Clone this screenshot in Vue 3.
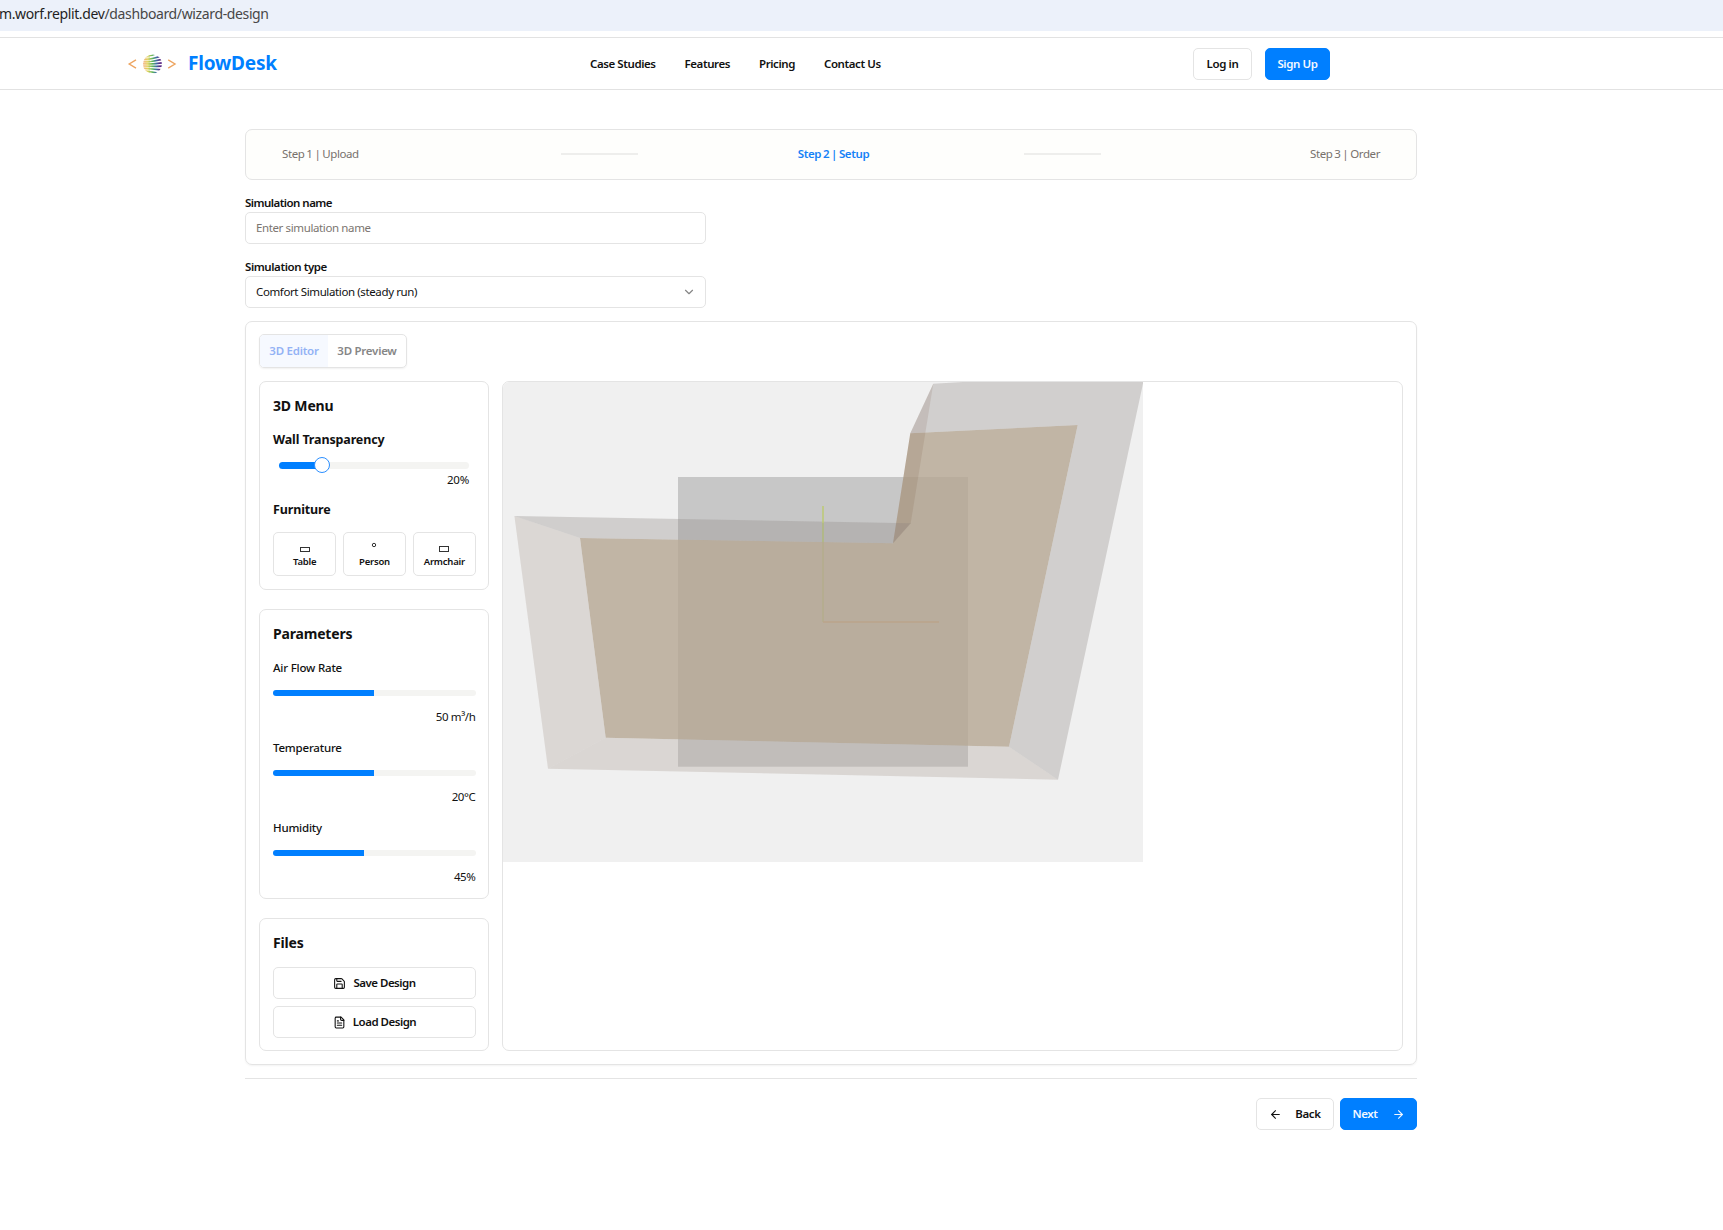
<script setup>
const nav = [
  { label: 'Case Studies', cls: 'n1' },
  { label: 'Features', cls: 'n2' },
  { label: 'Pricing', cls: 'n3' },
  { label: 'Contact Us', cls: 'n4' },
]
const params = [
  { label: 'Air Flow Rate', value: '50 m³/h', fill: 49.8 },
  { label: 'Temperature', value: '20°C', fill: 49.8 },
  { label: 'Humidity', value: '45%', fill: 45 },
]
// right-hand heights of the globe's blades, fanning out from its left rim
const blades = [-13, -8.4, -4.6, -1.2, 2.2, 5.8, 10]
const blade = (s) => {
  const l = 12 + s * 0.62
  const r = 12 + s
  return `M15 ${l} Q24 ${l + 0.3} 35 ${r - 0.9} V${r + 0.9} Q24 ${l + 2.2} 15 ${l + 0.9}Z`
}
</script>

<template>
  <div class="page">
    <div class="address"><span class="host">m.worf.replit.dev</span><span class="path">/dashboard/wizard-design</span></div>

    <header class="header">
      <div class="brand">
        <svg class="logo" width="50" height="24" viewBox="0 0 50 24">
          <defs>
            <linearGradient id="globe" gradientUnits="userSpaceOnUse" x1="16" y1="0" x2="35" y2="0">
              <stop offset="0" stop-color="#f5ab7a" />
              <stop offset="0.25" stop-color="#e0d45c" />
              <stop offset="0.5" stop-color="#5cb35c" />
              <stop offset="0.7" stop-color="#3d6fa8" />
              <stop offset="0.88" stop-color="#5b2a86" />
            </linearGradient>
            <clipPath id="disc"><circle cx="25.500" cy="12" r="9.500" /></clipPath>
          </defs>
          <g fill="none" stroke="#eda561" stroke-width="1.400">
            <path d="M9 7.800 2.200 12l6.800 4.200" />
            <path d="M41.200 7.800 48 12l-6.800 4.200" />
          </g>
          <g clip-path="url(#disc)" fill="url(#globe)">
            <path v-for="s in blades" :key="s" :d="blade(s)" />
            <path d="M15 0h8v24H15z" opacity="0.4" />
          </g>
        </svg>
        <span class="name">FlowDesk</span>
      </div>
      <nav class="nav">
        <a v-for="n in nav" :key="n.label" :class="n.cls">{{ n.label }}</a>
      </nav>
      <div class="auth">
        <button class="btn login">Log in</button>
        <button class="btn primary signup">Sign Up</button>
      </div>
    </header>

    <main class="main">
      <div class="steps">
        <span class="s1">Step 1 | Upload</span>
        <i></i>
        <span class="s2">Step 2 | Setup</span>
        <i></i>
        <span class="s3">Step 3 | Order</span>
      </div>

      <label class="label first">Simulation name</label>
      <div class="field placeholder"><span>Enter simulation name</span></div>
      <label class="label">Simulation type</label>
      <div class="field">
        <span>Comfort Simulation (steady run)</span>
        <svg width="14" height="14" viewBox="0 0 24 24" fill="none" stroke="#868686" stroke-width="2" stroke-linecap="round" stroke-linejoin="round"><path d="m6 9 6 6 6-6" /></svg>
      </div>

      <section class="card">
        <div class="tabs">
          <div class="tab active"><span>3D Editor</span></div>
          <div class="tab"><span>3D Preview</span></div>
        </div>

        <div class="cols">
          <aside class="side">
            <div class="panel menu">
              <h3 class="t-menu">3D Menu</h3>
              <h4 class="t-wall">Wall Transparency</h4>
              <div class="slider"><div class="range"></div><div class="thumb"></div></div>
              <div class="pct">20%</div>
              <h4 class="t-furn">Furniture</h4>
              <div class="furniture">
                <button>
                  <svg width="12" height="14" viewBox="0 0 12 14"><rect x="1.500" y="6.500" width="9" height="4" fill="none" stroke="#333" /></svg>
                  <span>Table</span>
                </button>
                <button>
                  <svg width="12" height="14" viewBox="0 0 12 14"><circle cx="6" cy="4" r="1.700" fill="none" stroke="#333" /></svg>
                  <span>Person</span>
                </button>
                <button>
                  <svg width="12" height="14" viewBox="0 0 12 14"><rect x="1.500" y="5.500" width="9" height="5" fill="none" stroke="#333" /></svg>
                  <span>Armchair</span>
                </button>
              </div>
            </div>

            <div class="panel params">
              <h3 class="t-params">Parameters</h3>
              <div v-for="p in params" :key="p.label" class="param">
                <div class="p-label">{{ p.label }}</div>
                <div class="bar"><div :style="{ width: p.fill + '%' }"></div></div>
                <div class="p-value">{{ p.value }}</div>
              </div>
            </div>

            <div class="panel files">
              <h3 class="t-files">Files</h3>
              <button class="btn file">
                <svg width="13" height="13" viewBox="0 0 24 24" fill="none" stroke="currentColor" stroke-width="2" stroke-linecap="round" stroke-linejoin="round"><path d="M15.200 3a2 2 0 0 1 1.400.6l3.800 3.800a2 2 0 0 1 .6 1.400V19a2 2 0 0 1-2 2H5a2 2 0 0 1-2-2V5a2 2 0 0 1 2-2z" /><path d="M17 21v-7a1 1 0 0 0-1-1H8a1 1 0 0 0-1 1v7" /><path d="M7 3v4a1 1 0 0 0 1 1h7" /></svg>
                <span>Save Design</span>
              </button>
              <button class="btn file">
                <svg width="13" height="13" viewBox="0 0 24 24" fill="none" stroke="currentColor" stroke-width="2" stroke-linecap="round" stroke-linejoin="round"><path d="M15 2H6a2 2 0 0 0-2 2v16a2 2 0 0 0 2 2h12a2 2 0 0 0 2-2V7Z" /><path d="M14 2v4a2 2 0 0 0 2 2h4" /><path d="M10 9H8" /><path d="M16 13H8" /><path d="M16 17H8" /></svg>
                <span>Load Design</span>
              </button>
            </div>
          </aside>

          <div class="viewer">
            <svg class="scene" width="640" height="480" viewBox="503 382 640 480">
              <rect x="503" y="382" width="640" height="480" fill="#f0f0f0" />
              <rect x="678" y="477" width="290" height="289.700" fill="#000" opacity="0.167" />
              <!-- floor -->
              <path d="M580 538 893 543.300 910.300 433.300 1077.700 425 1009 746.700 605.700 737.700Z" fill="#b5a692" opacity="0.8" />
              <!-- walls -->
              <path d="M514.400 516 580 538 605.700 737.700 548 768.700Z" fill="#bbb2ab" opacity="0.4" />
              <path d="M548 768.700 605.700 737.700 1009 746.700 1058 779.700Z" fill="#b8afa8" opacity="0.4" />
              <path d="M514.400 516 910.700 523.300 893 543.300 580 538Z" fill="#96908c" opacity="0.35" />
              <path d="M910.300 433.300 933.300 383.700 963 382H1143.300L1058 779.700 1009 746.700 1077.700 425Z" fill="#99928e" opacity="0.35" />
              <path d="M933.300 383.700 910.300 433.300 893 543.300 910.700 523.300Z" fill="#6e4428" opacity="0.12" />
              <!-- axes -->
              <path d="M823 506V523" stroke="#bccb6e" stroke-width="1.400" />
              <path d="M823 523V542" stroke="#afba78" stroke-width="1.400" />
              <path d="M823 542V622" stroke="#b4ad8b" stroke-width="1.400" />
              <path d="M823 622H939" stroke="#bba58b" stroke-width="1.400" />
            </svg>
          </div>
        </div>
      </section>

      <div class="footer">
        <button class="btn back">
          <svg width="13" height="13" viewBox="0 0 24 24" fill="none" stroke="currentColor" stroke-width="2" stroke-linecap="round" stroke-linejoin="round"><path d="m12 19-7-7 7-7" /><path d="M19 12H5" /></svg>
          <span>Back</span>
        </button>
        <button class="btn primary next">
          <span>Next</span>
          <svg width="13" height="13" viewBox="0 0 24 24" fill="none" stroke="currentColor" stroke-width="2" stroke-linecap="round" stroke-linejoin="round"><path d="M5 12h14" /><path d="m12 5 7 7-7 7" /></svg>
        </button>
      </div>
    </main>
  </div>
</template>

<style>
body { background: #fff; }
</style>

<style scoped>
* { box-sizing: border-box; }
.page { width: 1723px; height: 1230px; overflow: hidden; background: #fff; color: #111; font-family: "Noto Sans", "Open Sans", sans-serif; font-size: 11.5px; line-height: 16px; letter-spacing: -0.38px; white-space: nowrap; }
.address { height: 31px; margin-left: -1px; background: #ecf1fa; font-size: 14px; line-height: 28px; letter-spacing: -0.37px; }
.host { color: #1f1f1f; }
.path { color: #474747; }
.header { margin-top: 6px; height: 53px; border-top: 1px solid #e2e2e2; border-bottom: 1px solid #e2e2e2; display: flex; align-items: center; padding-left: 127px; }
.brand { display: flex; align-items: center; width: 463px; }
.name { margin-left: 11px; font-size: 19px; font-weight: 700; line-height: 22px; padding-bottom: 1px; letter-spacing: -0.19px; color: #007fff; }
.nav { display: flex; width: 603px; font-weight: 600; letter-spacing: -0.42px; }
.n1 { width: 94.500px; } .n2 { width: 74.500px; } .n3 { width: 65px; }
.auth { display: flex; gap: 13px; }
.btn { display: flex; align-items: center; justify-content: center; height: 32px; padding: 0; border: 1px solid #e4e4e4; border-radius: 5px; background: #fff; color: #111; font: inherit; font-weight: 600; letter-spacing: inherit; }
.btn.primary { background: #007fff; border-color: #007fff; color: #f3f8ff; }
.login { width: 59px; } .signup { width: 65px; }

.main { width: 1172px; margin: 39px 0 0 245px; }
.steps { height: 51px; border: 1px solid #e4e4e4; border-radius: 7px; background: #fefefc; display: flex; align-items: center; padding: 0 35px 2px 36px; color: #77716c; letter-spacing: -0.4px; word-spacing: -0.7px; }
.steps i { width: 77px; height: 2px; background: #eeeeec; }
.s1, .s3 { width: 279px; }
.s3 { text-align: right; }
.s2 { width: 386px; padding-left: 5px; text-align: center; color: #1582f7; font-weight: 600; }
.label { display: block; margin-top: 15px; height: 17px; font-weight: 600; letter-spacing: -0.42px; }
.label.first { letter-spacing: -0.54px; }
.field { width: 461px; height: 32px; border: 1px solid #e4e4e4; border-radius: 5px; padding: 0 9px 0 10px; display: flex; align-items: center; justify-content: space-between; }
.placeholder { color: #7b7570; }

.card { margin-top: 13px; height: 744px; border: 1px solid #e4e4e4; border-radius: 7px; box-shadow: 0 1px 2px rgba(0, 0, 0, 0.05); padding: 12px 13px; }
.tabs { width: 148px; height: 34px; border: 1px solid #e4e4e4; border-radius: 5px; box-shadow: 0 1px 2px rgba(0, 0, 0, 0.06); display: flex; overflow: hidden; font-weight: 600; letter-spacing: -0.26px; color: #868686; }
.tab { flex: 1; display: flex; align-items: center; justify-content: center; }
.tab.active { flex: 0 0 68px; background: #f6f9ff; color: #93b2f5; }
.cols { display: flex; gap: 13px; margin-top: 13px; height: 670px; }
.side { width: 230px; display: flex; flex-direction: column; gap: 19px; }
.panel { border: 1px solid #e4e4e4; border-radius: 7px; padding: 0 12px 0 13px; }
.menu { height: 209px; }
.params { height: 290px; }
.files { height: 133px; }
h3, h4 { margin: 0; font-weight: 700; letter-spacing: -0.18px; }
h3 { font-size: 14px; line-height: 20px; margin-top: 14px; }
h4 { font-size: 12.500px; line-height: 18px; letter-spacing: -0.13px; }
.t-wall { margin-top: 15px; }
.slider { position: relative; margin: 13px 7px 0 6px; height: 7px; border-radius: 4px; background: #f4f4f2; }
.range { width: 38px; height: 7px; border-radius: 4px 0 0 4px; background: #007fff; }
.thumb { position: absolute; left: 35px; top: -5px; width: 16px; height: 16px; border-radius: 50%; border: 1px solid #2b8fff; background: #fff; }
.pct { margin: 3px 7px 0 0; text-align: right; letter-spacing: -0.2px; }
.t-furn { margin-top: 13px; }
.furniture { display: flex; gap: 6.500px; margin-top: 13px; }
.furniture button { flex: 1 1 0; min-width: 0; height: 44px; padding: 8px 0 0; border: 1px solid #e4e4e4; border-radius: 5px; background: #fff; display: flex; flex-direction: column; align-items: center; font: 600 9.500px/14px "Noto Sans", sans-serif; letter-spacing: -0.2px; color: #111; }
.param { height: 80px; }
.t-params + .param { margin-top: 16px; }
.p-label { font-weight: 500; height: 16px; letter-spacing: -0.2px; }
.bar { margin-top: 14px; height: 6px; border-radius: 3px; background: #f4f4f2; overflow: hidden; }
.bar div { height: 6px; background: #007fff; }
.p-value { margin-top: 13px; padding-right: 0.5px; text-align: right; }
.t-files { margin-bottom: 14px; }
.file { width: 203px; margin-bottom: 7px; letter-spacing: -0.5px; }
.file svg { margin-right: 7px; }
.viewer { width: 901px; border: 1px solid #e4e4e4; border-radius: 7px; overflow: hidden; }
.scene { display: block; }
.footer { margin-top: 13px; border-top: 1px solid #e4e4e4; padding-top: 19px; display: flex; justify-content: flex-end; gap: 6px; }
.back { width: 78px; gap: 13px; } .next { width: 77px; gap: 14px; }
</style>
